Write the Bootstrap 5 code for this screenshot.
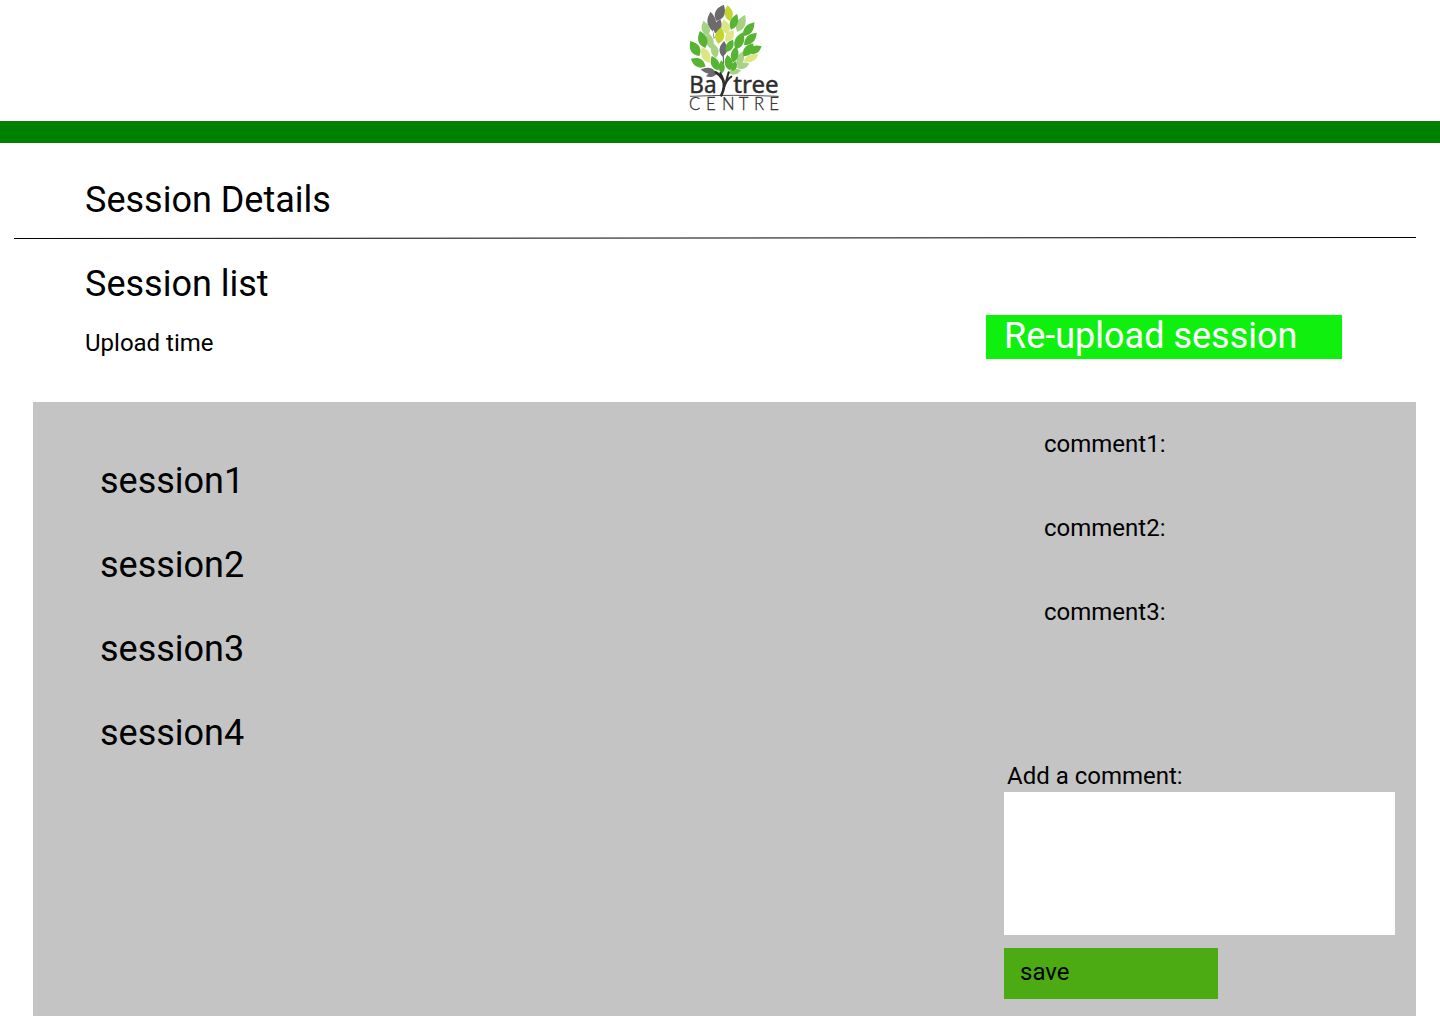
<!DOCTYPE html>
<html lang="en">
<head>
<meta charset="utf-8">
<meta name="viewport" content="width=device-width, initial-scale=1">
<title>Baytree Centre - Session Details</title>
<link href="https://cdn.jsdelivr.net/npm/bootstrap@5.3.0/dist/css/bootstrap.min.css" rel="stylesheet">
<style>
  body { font-family: Roboto, "Liberation Sans", sans-serif; color: #000; }
  .brand-bar { height: 143px; border-bottom: 22px solid #008000; padding-left: 680px; }
  .brand-logo { width: 110px; height: 120px; opacity: .99; }
  .t-lg { font-size: 36px; line-height: 42px; font-weight: 400; }
  .t-md { font-size: 24px; line-height: 28px; font-weight: 400; }
  .page-head { padding: 36px 0 0 85px; height: 94px; }
  .rule { height: 3px; margin-left: 14px; width: 1402px; }
  .list-head { padding: 23px 98px 0 85px; height: 162px; }
  .list-head .t-md { margin-top: 24px; }
  .btn-upload { width: 356px; height: 44px; margin-top: 52px; padding: 0 0 2px 18px; background: #10f00f; }
  .panel { width: 1383px; height: 614px; margin-left: 33px; background: #c4c4c4; }
  .sessions { padding: 58px 0 0 67px; gap: 42px; }
  .side { width: 412px; padding: 28px 21px 0 0; }
  .comments { gap: 56px; padding-left: 40px; height: 332px; }
  .add-label { padding-left: 3px; margin-bottom: 2px; }
  .comment-box { height: 143px; resize: none; margin-bottom: 13px; }
  .btn-save { width: 214px; height: 51px; padding: 0 0 3px 16px; background: #4caa12; }
</style>
</head>
<body class="bg-white overflow-hidden">
<header class="brand-bar">
  <svg class="brand-logo d-block" viewBox="0 0 330 360" role="img" aria-label="Baytree Centre">
    <defs><path id="lf" d="M3-27C11-16 16-7 14 4C12 15 5 20-3 26C-11 18-16 9-14-2C-12-13-5-19 3-27Z"/></defs>
    <g fill="#6c696c">
      <use href="#lf" transform="translate(120 39) rotate(18)"/>
      <use href="#lf" transform="translate(95 65) rotate(-12) scale(.9 1.1)"/>
      <use href="#lf" transform="translate(113 79) rotate(15) scale(.8 .85)"/>
      <use href="#lf" transform="translate(130 147) scale(.8 .9)"/>
      <use href="#lf" transform="translate(85 212) rotate(-86) scale(.6 .85)"/>
      <use href="#lf" transform="translate(96 223) rotate(-112) scale(.5 .7)"/>
      <path d="M98 90l6 24-3 3zM128 165h4v28h-3z"/>
    </g>
    <g fill="#a5d382">
      <use href="#lf" transform="translate(77 86) rotate(-22) scale(.85 .9)"/>
      <use href="#lf" transform="translate(89 123) rotate(-18) scale(.8 .95)"/>
      <use href="#lf" transform="translate(104 152) rotate(-18) scale(.8 .85)"/>
      <use href="#lf" transform="translate(183 71) rotate(20) scale(.9 1.05)"/>
      <use href="#lf" transform="translate(181 177) rotate(14) scale(.75 .9)"/>
      <use href="#lf" transform="translate(189 197) rotate(66) scale(.65 .75)"/>
      <use href="#lf" transform="translate(164 215) rotate(74) scale(.6 .72)"/>
    </g>
    <g fill="#c1d62c">
      <use href="#lf" transform="translate(146 40) rotate(-14) scale(.85 .9)"/>
      <use href="#lf" transform="translate(119 107) rotate(3) scale(.95)"/>
    </g>
    <g fill="#dce683">
      <use href="#lf" transform="translate(137 81) rotate(-22) scale(.85)"/>
      <use href="#lf" transform="translate(149 108) rotate(26) scale(.8)"/>
      <use href="#lf" transform="translate(77 165) rotate(-32) scale(.9 .98)"/>
      <use href="#lf" transform="translate(213 174) rotate(60) scale(.75 .92)"/>
    </g>
    <g fill="#56b431">
      <use href="#lf" transform="translate(162 66) rotate(16) scale(.8 .95)"/>
      <use href="#lf" transform="translate(206 88) rotate(34) scale(.85 1)"/>
      <use href="#lf" transform="translate(211 117) rotate(40) scale(.85 1)"/>
      <use href="#lf" transform="translate(178 123) rotate(18) scale(.95 1.05)"/>
      <use href="#lf" transform="translate(205 150) rotate(32) scale(.9)"/>
      <use href="#lf" transform="translate(225 149) rotate(56) scale(.8 .82)"/>
      <use href="#lf" transform="translate(164 163) rotate(5) scale(.8 .95)"/>
      <use href="#lf" transform="translate(149 138) rotate(22) scale(.75 .8)"/>
      <use href="#lf" transform="translate(146 188) rotate(-16) scale(.85 .9)"/>
      <use href="#lf" transform="translate(162 199) rotate(14) scale(.6)"/>
      <use href="#lf" transform="translate(68 119) rotate(-24) scale(.95 1)"/>
      <use href="#lf" transform="translate(45 146) rotate(-38) scale(1)"/>
      <use href="#lf" transform="translate(55 188) rotate(-68) scale(.9 .95)"/>
      <use href="#lf" transform="translate(105 190) rotate(-30) scale(.85 .9)"/>
      <use href="#lf" transform="translate(125 201) rotate(-8) scale(.65 .75)"/>
    </g>
    <g fill="none" stroke="#2d2a2c" stroke-linecap="round">
      <path d="M124 286C133 268 135 256 129 240Q121 224 107 217" stroke-width="8"/>
      <path d="M131 266C137 246 144 236 154 230M131 243Q127 229 121 219M137 250Q142 230 146 217" stroke-width="6"/>
      <path d="M31 289Q160 283 295 289" stroke-width="2.5"/>
    </g>
    <g fill="#2d2a2c" font-family="'Noto Sans', sans-serif">
      <g font-size="70" stroke="#2d2a2c" stroke-width="1.2">
        <text x="28" y="279" textLength="82" lengthAdjust="spacingAndGlyphs">Ba</text>
        <text x="160" y="279" textLength="136" lengthAdjust="spacingAndGlyphs">tree</text>
      </g>
      <text y="331" font-size="50" font-family="Lato, sans-serif" font-weight="300" stroke="#2d2a2c" stroke-width=".8" x="27 78 126 176 222 268">CENTRE</text>
    </g>
  </svg>
</header>
<main>
  <div class="page-head"><h1 class="t-lg mb-0">Session Details</h1></div>
  <svg class="rule d-block" viewBox="0 0 1402 3" aria-hidden="true"><path d="M0 1.5L1402 .5" stroke="#000"/></svg>
  <div class="list-head d-flex justify-content-between align-items-start">
    <div>
      <h2 class="t-lg mb-0">Session list</h2>
      <p class="t-md mb-0">Upload time</p>
    </div>
    <button class="btn btn-upload t-lg rounded-0 border-0 text-white text-start" type="button">Re-upload session</button>
  </div>
  <section class="panel d-flex justify-content-between">
    <ul class="sessions list-unstyled d-flex flex-column t-lg mb-0">
      <li>session1</li><li>session2</li><li>session3</li><li>session4</li>
    </ul>
    <form class="side">
      <div class="comments d-flex flex-column t-md">
        <div>comment1:</div><div>comment2:</div><div>comment3:</div>
      </div>
      <label class="add-label d-block t-md" for="comment">Add a comment:</label>
      <textarea id="comment" class="comment-box form-control rounded-0 border-0"></textarea>
      <button class="btn btn-save t-md rounded-0 border-0 text-black text-start d-block" type="button">save</button>
    </form>
  </section>
</main>
<script src="https://cdn.jsdelivr.net/npm/bootstrap@5.3.0/dist/js/bootstrap.bundle.min.js"></script>
</body>
</html>
